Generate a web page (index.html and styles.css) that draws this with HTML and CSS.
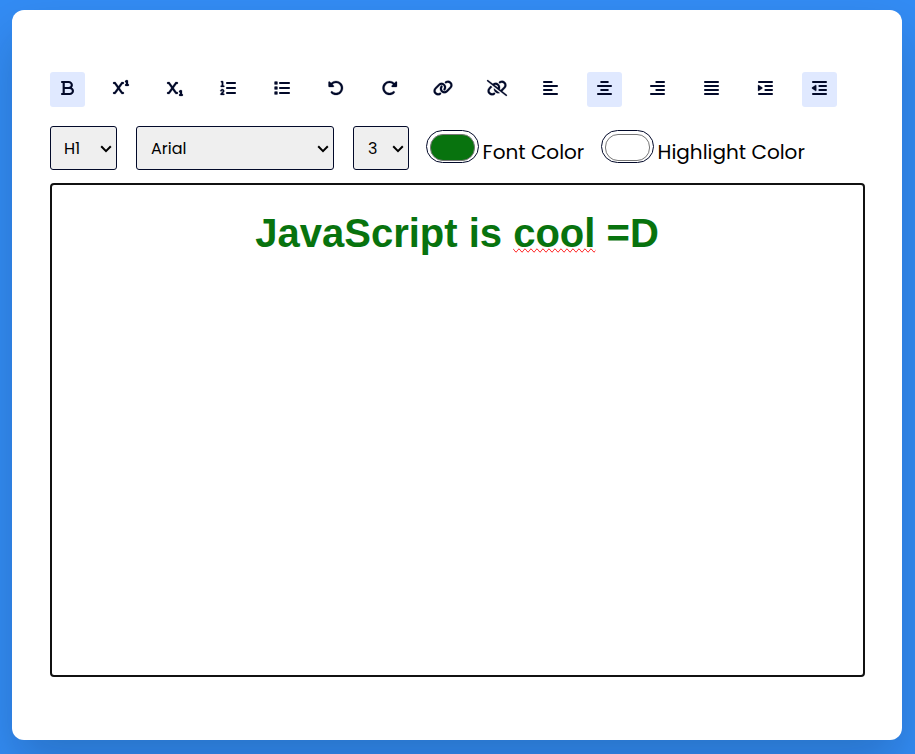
FILE: index.html
```
<!DOCTYPE html>
<html lang="en">
<head>
<meta charset="utf-8">
<title>Rich Text Editor</title>
<link rel="stylesheet" href="styles.css">
</head>
<body>
<main class="container">
  <div class="options">
    <button class="button active" title="Bold"><svg class="bold" width="13" height="16" viewBox="0 0 384 512" preserveAspectRatio="none"><path d="M0 64C0 46.3 14.3 32 32 32H80 96 224c70.7 0 128 57.3 128 128c0 31.3-11.3 60.1-30 82.3c37.1 22.4 62 63.1 62 109.7c0 70.7-57.3 128-128 128H96 80 32c-17.7 0-32-14.3-32-32s14.3-32 32-32H48V256 96H32C14.3 96 0 81.7 0 64zM224 224c35.3 0 64-28.7 64-64s-28.7-64-64-64H112V224H224zM112 288V416H256c35.3 0 64-28.7 64-64s-28.7-64-64-64H224 112z"/></svg></button>
    <button class="button" title="Superscript"><svg width="16" height="16" viewBox="0 0 512 512"><path id="one" d="M480 32c0-11.1-5.7-21.4-15.2-27.2s-21.2-6.4-31.1-1.4l-32 16c-15.8 7.9-22.2 27.1-14.3 42.9C393 73.5 404.3 80.2 416 80.2V128c-17.7 0-32 14.3-32 32s14.3 32 32 32h64c17.7 0 32-14.3 32-32s-14.3-32-32-32V32z"/><path id="ex" d="M32 64C14.3 64 0 78.3 0 96s14.3 32 32 32H47.3l89.6 128L47.3 384H32c-17.7 0-32 14.3-32 32s14.3 32 32 32H64c10.4 0 20.2-5.1 26.2-13.6L176 311.8l85.8 122.6c6 8.6 15.8 13.6 26.2 13.6h32c17.7 0 32-14.3 32-32s-14.3-32-32-32H304.7L215.1 256l89.6-128H320c17.7 0 32-14.3 32-32s-14.3-32-32-32H288c-10.4 0-20.2 5.1-26.2 13.6L176 200.2 90.2 77.6C84.2 69.1 74.4 64 64 64H32z"/></svg></button>
    <button class="button" title="Subscript"><svg width="16" height="16" viewBox="0 0 512 512"><use href="#ex"/><use href="#one" transform="translate(0 320)"/></svg></button>
    <button class="button" title="Ordered list"><svg width="16" height="16" viewBox="0 0 512 512"><path d="M24 56c0-13.3 10.7-24 24-24H80c13.3 0 24 10.7 24 24V176h16c13.3 0 24 10.7 24 24s-10.7 24-24 24H40c-13.3 0-24-10.7-24-24s10.7-24 24-24H56V80H48C34.7 80 24 69.3 24 56zM86.7 341.2c-6.5-7.4-18.3-6.9-24 1.2L51.5 357.9c-7.7 10.8-22.7 13.3-33.5 5.6s-13.3-22.7-5.6-33.5l11.1-15.6c23.7-33.2 72.3-35.6 99.2-4.9c21.3 24.4 20.8 60.9-1.1 84.7L86.8 432H120c13.3 0 24 10.7 24 24s-10.7 24-24 24H32c-9.5 0-18.2-5.6-22-14.4s-2.1-18.9 4.3-25.9l72-78c5.3-5.8 5.4-14.6 .3-20.5z"/><path class="line" d="M224 96H480M224 256H480M224 416H480"/></svg></button>
    <button class="button" title="Unordered list"><svg width="16" height="16" viewBox="0 0 512 512"><rect x="16" y="48" width="96" height="96" rx="16"/><rect x="16" y="208" width="96" height="96" rx="16"/><rect x="16" y="368" width="96" height="96" rx="16"/><path class="line" d="M192 96H480M192 256H480M192 416H480"/></svg></button>
    <button class="button" title="Undo"><svg width="16" height="16" viewBox="0 0 512 512"><path id="undo" d="M48.5 224H40c-13.3 0-24-10.7-24-24V72c0-9.7 5.8-18.5 14.8-22.2s19.3-1.7 26.2 5.2L98.6 96.6c87.6-86.5 228.7-86.2 315.8 1c87.5 87.5 87.5 229.3 0 316.8s-229.3 87.5-316.8 0c-12.5-12.5-12.5-32.8 0-45.3s32.8-12.5 45.3 0c62.5 62.5 163.8 62.5 226.3 0s62.5-163.8 0-226.3c-62.2-62.2-162.7-62.5-225.3-1L185 183c6.9 6.9 8.9 17.2 5.2 26.2s-12.5 14.8-22.2 14.8H48.5z"/></svg></button>
    <button class="button" title="Redo"><svg width="16" height="16" viewBox="0 0 512 512"><use href="#undo" transform="matrix(-1 0 0 1 528 0)"/></svg></button>
    <button class="button" title="Link"><svg width="20" height="16" viewBox="0 0 640 512"><path d="M579.8 267.7c56.5-56.5 56.5-148 0-204.5c-50-50-128.8-56.5-186.3-15.4l-1.6 1.1c-14.4 10.3-17.7 30.3-7.4 44.6s30.3 17.7 44.6 7.4l1.6-1.1c32.1-22.9 76-19.3 103.8 8.6c31.5 31.5 31.5 82.5 0 114L422.3 334.8c-31.5 31.5-82.5 31.5-114 0c-27.9-27.9-31.5-71.8-8.6-103.8l1.1-1.6c10.3-14.4 6.9-34.4-7.4-44.6s-34.4-6.9-44.6 7.4l-1.1 1.6C206.5 251.2 213 330 263 380c56.5 56.5 148 56.5 204.5 0L579.8 267.7zM60.2 244.3c-56.5 56.5-56.5 148 0 204.5c50 50 128.8 56.5 186.3 15.4l1.6-1.1c14.4-10.3 17.7-30.3 7.4-44.6s-30.3-17.7-44.6-7.4l-1.6 1.1c-32.1 22.9-76 19.3-103.8-8.6C74 372 74 321 105.5 289.5L217.7 177.2c31.5-31.5 82.5-31.5 114 0c27.9 27.9 31.5 71.8 8.6 103.9l-1.1 1.6c-10.3 14.4-6.9 34.4 7.4 44.6s34.4 6.9 44.6-7.4l1.1-1.6C433.5 260.8 427 182 377 132c-56.5-56.5-148-56.5-204.5 0L60.2 244.3z"/></svg></button>
    <button class="button" title="Unlink"><svg width="20" height="16" viewBox="0 0 640 512"><path d="M38.8 5.1C28.4-3.1 13.3-1.2 5.1 9.2S-1.2 34.7 9.2 42.9l592 464c10.4 8.2 25.5 6.3 33.7-4.1s6.3-25.5-4.1-33.7L489.3 358.2l90.5-90.5c56.5-56.5 56.5-148 0-204.5c-50-50-128.8-56.5-186.3-15.4l-1.6 1.1c-14.4 10.3-17.7 30.3-7.4 44.6s30.3 17.7 44.6 7.4l1.6-1.1c32.1-22.9 76-19.3 103.8 8.6c31.5 31.5 31.5 82.5 0 114l-96 96-31.9-25C430.9 239.6 420.1 175.1 377 132c-52.2-52.3-134.5-56.2-191.3-11.7L38.8 5.1zM239 162c30.1-14.9 67.7-9.9 92.8 15.3c20 20 27.5 48.3 21.7 74.5L239 162zM406.6 416.4L220.9 270c-2.1 39.8 12.2 80.1 42.2 110c38.9 38.9 94.4 51 143.6 36.3zm-290-228.5L60.2 244.3c-56.5 56.5-56.5 148 0 204.5c50 50 128.8 56.5 186.3 15.4l1.6-1.1c14.4-10.3 17.7-30.3 7.4-44.6s-30.3-17.7-44.6-7.4l-1.6 1.1c-32.1 22.9-76 19.3-103.8-8.6C74 372 74 321 105.5 289.5l61.8-61.8-50.6-39.9z"/></svg></button>
    <button class="button" title="Align left"><svg width="15" height="16" viewBox="0 0 448 512" preserveAspectRatio="none"><path class="line" d="M32 64H256M32 192H416M32 320H256M32 448H416"/></svg></button>
    <button class="button active" title="Align center"><svg width="15" height="16" viewBox="0 0 448 512" preserveAspectRatio="none"><path class="line" d="M128 64H320M32 192H416M128 320H320M32 448H416"/></svg></button>
    <button class="button" title="Align right"><svg width="15" height="16" viewBox="0 0 448 512" preserveAspectRatio="none"><path class="line" d="M192 64H416M32 192H416M192 320H416M32 448H416"/></svg></button>
    <button class="button" title="Justify"><svg width="15" height="16" viewBox="0 0 448 512" preserveAspectRatio="none"><path class="line" d="M32 64H416M32 192H416M32 320H416M32 448H416"/></svg></button>
    <button class="button" title="Indent"><svg width="15" height="16" viewBox="0 0 448 512" preserveAspectRatio="none"><path class="line" d="M32 64H416M224 192H416M224 320H416M32 448H416"/><path d="M127.8 268.6L25.8 347.9C15.3 356.1 0 348.6 0 335.3V176.7c0-13.3 15.3-20.8 25.8-12.6l101.9 79.3c8.2 6.4 8.2 18.9 0 25.3z"/></svg></button>
    <button class="button active" title="Outdent"><svg width="15" height="16" viewBox="0 0 448 512" preserveAspectRatio="none"><path class="line" d="M32 64H416M224 192H416M224 320H416M32 448H416"/><path d="M.2 268.6l102 79.3c10.5 8.2 25.8.7 25.8-12.6V176.7c0-13.3-15.3-20.8-25.8-12.6L.2 243.4c-8.2 6.4-8.2 18.9 0 25.2z"/></svg></button>
  </div>
  <div class="fields">
    <div class="select heading"><span>H1</span><svg class="chevron" width="12" height="8" viewBox="0 0 12 8"><path d="M1.2 1.3L6 6.1l4.8-4.8"/></svg></div>
    <div class="select family"><span>Arial</span><svg class="chevron" width="12" height="8" viewBox="0 0 12 8"><path d="M1.2 1.3L6 6.1l4.8-4.8"/></svg></div>
    <div class="select size"><span>3</span><svg class="chevron" width="12" height="8" viewBox="0 0 12 8"><path d="M1.2 1.3L6 6.1l4.8-4.8"/></svg></div>
    <div class="picker"><div class="swatch green"></div><span class="label font-label">Font Color</span></div>
    <div class="picker"><div class="swatch"></div><span class="label">Highlight Color</span></div>
  </div>
  <div class="editor"><h1>JavaScript is <span class="misspelled">cool</span> =D</h1></div>
</main>
</body>
</html>
```
FILE: styles.css
```
* { box-sizing: border-box; margin: 0; padding: 0; }
body {
  height: 754px;
  padding: 10px 13px 14px 12px;
  overflow: hidden;
  background: #338cf4;
}
.container {
  height: 730px;
  padding: 62px 37px 0 38px;
  border-radius: 12px;
  background: #fff;
  box-shadow: 0 25px 50px rgba(7, 20, 35, 0.2);
  font-family: Poppins, Inter, sans-serif;
}
.options { display: flex; gap: 18.71px; }
.button {
  display: grid;
  place-items: center;
  width: 35px;
  height: 35px;
  padding: 0 0.6px 3px 0;
  border: 0;
  border-radius: 3px;
  background: #fff;
}
.button.active { background: #e0e9ff; }
.button svg {
  display: block;
  overflow: visible;
  fill: #020929;
  stroke: #020929;
  stroke-width: 8;
}
.button svg.bold { stroke: none; }
.button .line { fill: none; stroke-width: 68; stroke-linecap: round; }
.fields { display: flex; margin-top: 19px; height: 44px; }
.select {
  display: flex;
  align-items: center;
  justify-content: space-between;
  height: 44px;
  padding: 0 4px 0 14px;
  border: 1px solid #020929;
  border-radius: 3px;
  background: #efefef;
  font-size: 16px;
  color: #000;
}
.heading { width: 67px; padding-left: 13px; }
.family { width: 198px; margin-left: 19px; }
.size { width: 56px; margin: 0 17px 0 19px; }
.chevron { margin-top: 1px; fill: none; stroke: #000; stroke-width: 2; }
.picker { display: flex; }
.picker + .picker { margin-left: 17px; }
.swatch {
  width: 53px;
  height: 33px;
  margin-top: 4px;
  padding: 3px;
  border: 1px solid #020929;
  border-radius: 17px;
}
.swatch::before {
  content: "";
  display: block;
  height: 25px;
  border: 1px solid #777;
  border-radius: 13px;
  background: #fff;
}
.swatch.green::before { background: #08730e; }
.label { margin: 11px 0 0 3.6px; font-size: 20px; line-height: 30px; white-space: nowrap; }
.font-label { width: 101.4px; }
.editor {
  height: 494px;
  margin-top: 13px;
  padding: 25px 1px 0 0;
  border: 2px solid #111;
  border-radius: 4px;
}
.editor h1 {
  font: bold 40px/46px "Liberation Sans", Arial, sans-serif;
  text-align: center;
  color: #08730e;
}
.misspelled { text-decoration-line: spelling-error; }
```
